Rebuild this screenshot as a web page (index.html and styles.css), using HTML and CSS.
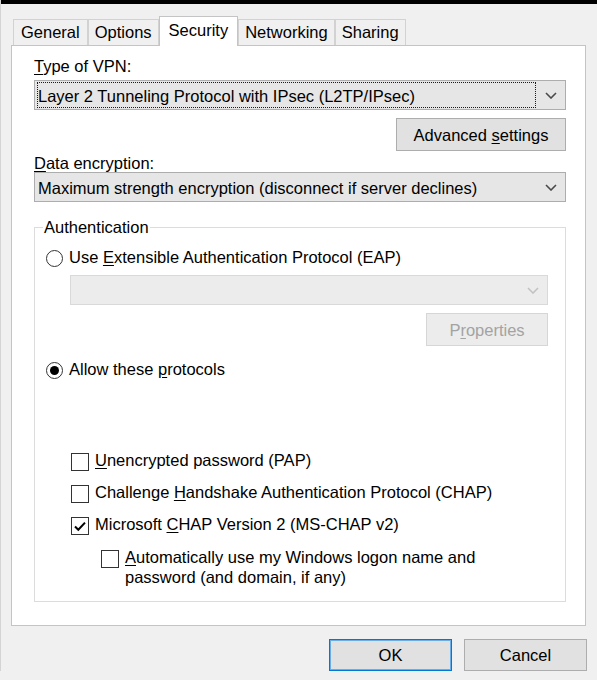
FILE: index.html
```html
<!DOCTYPE html>
<html>
<head>
    <title>VPN Connection Properties</title>
    <meta name="viewport" content="width=device-width, initial-scale=1">
    <link rel="stylesheet" href="styles.css">
</head>
<body>
    <div class="titlebar"></div>
    <div class="dialog">
        <div class="tabs">
            <div class="tab">General</div>
            <div class="tab">Options</div>
            <div class="tab active">Security</div>
            <div class="tab">Networking</div>
            <div class="tab">Sharing</div>
        </div>

        <div class="panel">
            <div class="label label-vpn"><u>T</u>ype of VPN:</div>
            <div class="combo combo-vpn">
                <div class="combo-value focused">Layer 2 Tunneling Protocol with IPsec (L2TP/IPsec)</div>
                <span class="chevron"><svg width="12" height="7" viewBox="0 0 12 7"><polyline points="1,1 6,6 11,1" /></svg></span>
            </div>
            <div class="button-row row-advanced">
                <button type="button" class="btn btn-advanced">Advanced <u>s</u>ettings</button>
            </div>

            <div class="label label-data"><u>D</u>ata encryption:</div>
            <div class="combo">
                <div class="combo-value">Maximum strength encryption (disconnect if server declines)</div>
                <span class="chevron"><svg width="12" height="7" viewBox="0 0 12 7"><polyline points="1,1 6,6 11,1" /></svg></span>
            </div>

            <fieldset class="group">
                <legend>Authentication</legend>
                <div class="group-body">
                    <div class="option row-eap">
                        <span class="radio"></span>
                        <span>Use <u>E</u>xtensible Authentication Protocol (EAP)</span>
                    </div>
                    <div class="combo combo-disabled">
                        <div class="combo-value"></div>
                        <span class="chevron"><svg width="12" height="7" viewBox="0 0 12 7"><polyline points="1,1 6,6 11,1" /></svg></span>
                    </div>
                    <div class="button-row row-props">
                        <button type="button" class="btn btn-props" disabled>P<u>r</u>operties</button>
                    </div>

                    <div class="option row-allow">
                        <span class="radio checked"></span>
                        <span>Allow these <u>p</u>rotocols</span>
                    </div>

                    <div class="option check-row row-pap">
                        <span class="check"></span>
                        <span><u>U</u>nencrypted password (PAP)</span>
                    </div>
                    <div class="option check-row">
                        <span class="check"></span>
                        <span>Challenge <u>H</u>andshake Authentication Protocol (CHAP)</span>
                    </div>
                    <div class="option check-row">
                        <span class="check checked"><svg width="16" height="16" viewBox="0 0 16 16"><path d="M3 8.5 L6.3 11.8 L13 4.6" /></svg></span>
                        <span>Microsoft <u>C</u>HAP Version 2 (MS-CHAP v2)</span>
                    </div>
                    <div class="option check-row row-auto">
                        <span class="check"></span>
                        <span class="wrap"><u>A</u>utomatically use my Windows logon name and<br>password (and domain, if any)</span>
                    </div>
                </div>
            </fieldset>
        </div>

        <div class="footer">
            <button type="button" class="btn btn-default">OK</button>
            <button type="button" class="btn">Cancel</button>
        </div>
    </div>
</body>
</html>
```

FILE: styles.css
```css
/* window frame */
body {
    margin: 0;
    background: #f0f0f0;
    border-left: 1px solid #d4d4d4;
    font-family: "Liberation Sans", Arial, sans-serif;
    font-size: 16.5px;
    line-height: 18px;
    color: #000;
}
.titlebar { height: 4px; background: #000; }
.dialog { padding: 12px 11px 0 10px; }
u { text-underline-offset: 2px; }

/* tab strip */
.tabs { display: flex; align-items: flex-end; margin-left: 2px; }
.tab {
    padding: 0 6px;
    line-height: 25px;
    background: #f0f0f0;
    border: 1px solid #d2d2d2;
    border-bottom: none;
    white-space: nowrap;
}
.tab:first-child { padding: 0 7px; }
.tab.active {
    position: relative;
    z-index: 1;
    padding: 0 9px 3px;
    margin-bottom: -1px;
    line-height: 26px;
    background: #fff;
    border-color: #c4c4c4;
}

.panel {
    background: #fff;
    border: 1px solid #c4c4c4;
    padding: 11px 19px 23px 22px;
}

.label-vpn { margin-bottom: 5px; }
.label-data { margin-top: 3px; }

/* combo boxes */
.combo {
    display: flex;
    align-items: center;
    height: 30px;
    box-sizing: border-box;
    background: #e6e6e6;
    border: 1px solid #adadad;
}
.combo-value {
    flex: 1;
    align-self: stretch;
    margin: 1px 0 1px 2px;
    padding-top: 1px;
    line-height: 24px;
    border: 1px solid transparent;
    white-space: nowrap;
    overflow: hidden;
}
.combo-value.focused { border: 1px dotted #1a1a1a; }
.chevron { width: 29px; display: flex; justify-content: center; }
.chevron svg polyline { fill: none; stroke: #4a4a4a; stroke-width: 1.6; }

.combo-disabled { margin: 8px 0 0 24px; background: #ececec; border-color: #d9d9d9; }
.combo-disabled .chevron svg polyline { stroke: #c2c2c2; }

/* push buttons */
.button-row { display: flex; justify-content: flex-end; }
.btn {
    font: inherit;
    color: #000;
    height: 33px;
    box-sizing: border-box;
    padding: 0;
    background: #e1e1e1;
    border: 1px solid #adadad;
    border-radius: 0;
}
.row-advanced { margin-top: 8px; }
.btn-advanced { width: 170px; }
.row-props { margin-top: 8px; }
.btn-props { width: 122px; background: #ececec; border-color: #d6d6d6; color: #a3a3a3; }

/* authentication group */
.group {
    margin: 16px 0 0;
    padding: 0;
    min-width: 0;
    border: 1px solid #dcdcdc;
}
.group legend { margin-left: 8px; padding: 0 1px; line-height: 18px; }
.group-body { padding: 0 17px 14px 11px; }

.option { display: flex; align-items: flex-start; gap: 6px; }
.row-eap { margin-top: 12px; }
.row-allow { margin-top: 14px; }
.row-pap { margin-top: 72px !important; }
.check-row { margin: 12px 0 0 25px; }
.row-auto { margin: 13px 0 0 55px; }
.row-auto .wrap { line-height: 19.5px; }

.radio {
    flex: none;
    width: 17px;
    height: 17px;
    margin-top: 2px;
    box-sizing: border-box;
    border: 1px solid #333;
    border-radius: 50%;
    background: #fff;
    display: flex;
    align-items: center;
    justify-content: center;
}
.radio.checked::after {
    content: '';
    width: 9px;
    height: 9px;
    border-radius: 50%;
    background: #000;
}
.check {
    flex: none;
    width: 18px;
    height: 18px;
    margin-top: 2px;
    box-sizing: border-box;
    border: 1px solid #333;
    background: #fff;
}
.check svg { display: block; }
.check svg path { fill: none; stroke: #000; stroke-width: 2; }

/* OK / Cancel */
.footer { display: flex; justify-content: flex-end; gap: 12px; margin-top: 13px; margin-right: -1px; }
.footer .btn { width: 123px; height: 32px; }
.btn-default { border-color: #0078d7; box-shadow: inset 0 0 0 1px #6aaee9; }
```
